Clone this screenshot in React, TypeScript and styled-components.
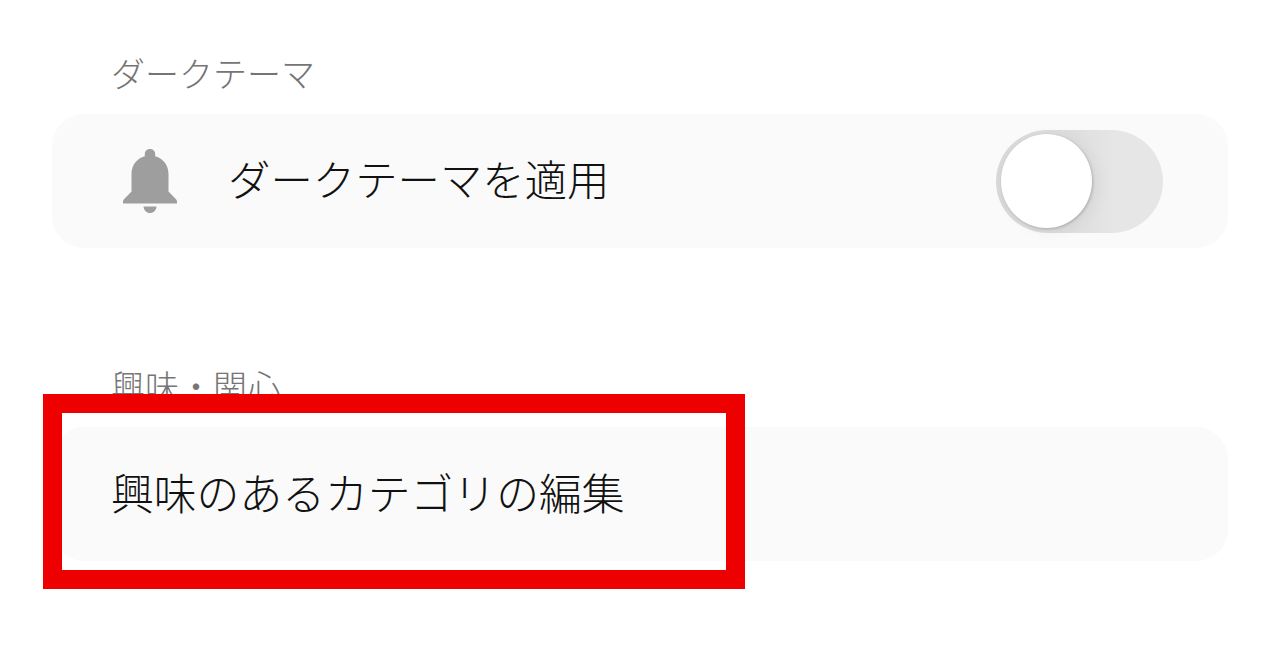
import React from "react";
import styled, { createGlobalStyle } from "styled-components";

const Global = createGlobalStyle`
  html, body { margin: 0; padding: 0; background: #fff; overflow: hidden; }
  #root { width: 1280px; height: 656px; }
`;

const Page = styled.div`
  position: relative;
  width: 1280px;
  height: 656px;
  box-sizing: border-box;
  padding: 50px 52px 0;
  display: flex;
  flex-direction: column;
  font-family: "Roboto", "Noto Sans CJK JP", sans-serif;
  overflow: hidden;
`;

const Section = styled.section`
  display: flex;
  flex-direction: column;
  & + & { margin-top: 115px; }
`;

const SectionLabel = styled.div`
  height: 50px;
  margin-bottom: 14px;
  padding-left: 59px;
  font-size: 34px;
  line-height: 50px;
  color: #757575;
  font-weight: 300;
`;

const Card = styled.div`
  height: 134px;
  border-radius: 32px;
  background: #fafafa;
  display: flex;
  align-items: center;
  padding: 0 65px 0 59px;
`;

const IconSlot = styled.div`
  width: 117px;
  flex: none;
  display: flex;
  align-items: center;
`;

const RowText = styled.div<{ $size: number }>`
  flex: 1;
  font-size: ${(p) => p.$size}px;
  font-weight: 300;
  color: #111;
  line-height: 62px;
  padding-top: 2px;
  white-space: nowrap;
`;

const Track = styled.div`
  position: relative;
  width: 167px;
  height: 103px;
  flex: none;
  border-radius: 52px;
  background: linear-gradient(90deg, #d8d8d8 0%, #dedede 45%, #e6e6e6 72%, #e6e6e6 100%);
`;

const Knob = styled.div`
  position: absolute;
  left: 5px;
  top: 4px;
  width: 91px;
  height: 94px;
  border-radius: 50%;
  background: #fff;
  box-shadow: 1px 1px 3px rgba(0, 0, 0, 0.2), 6px 3px 16px rgba(0, 0, 0, 0.05);
`;

const Highlight = styled.div`
  position: absolute;
  left: 43px;
  top: 394px;
  width: 702px;
  height: 195px;
  box-sizing: border-box;
  border: solid #ee0000;
  border-width: 19px;
  pointer-events: none;
`;

const Bell = () => (
  <svg width="54" height="66" viewBox="0 0 54 66" fill="#9e9e9e" style={{ display: "block", marginLeft: 12 }}>
    <path d="M27 1c3.2 0 5.200 2.200 5.200 5v2.200C40.500 10.500 45.500 17.500 45.500 26v17.500l7.500 7.700c.6.7 1 1.300 1 2.300v2H0v-2c0-1 .4-1.600 1-2.300l7.500-7.700V26C8.500 17.500 13.500 10.500 21.800 8.200V6c0-2.800 2-5 5.200-5z" />
    <path d="M20.500 58.500h13c-.4 4-3 6.500-6.500 6.500s-6.100-2.500-6.500-6.500z" />
  </svg>
);

export default function App() {
  return (
    <>
      <Global />
      <Page>
        <Section>
          <SectionLabel>ダークテーマ</SectionLabel>
          <Card>
            <IconSlot><Bell /></IconSlot>
            <RowText $size={42.4}>ダークテーマを適用</RowText>
            <Track><Knob /></Track>
          </Card>
        </Section>
        <Section>
          <SectionLabel>興味・関心</SectionLabel>
          <Card>
            <RowText $size={42.8}>興味のあるカテゴリの編集</RowText>
          </Card>
        </Section>
        <Highlight />
      </Page>
    </>
  );
}
